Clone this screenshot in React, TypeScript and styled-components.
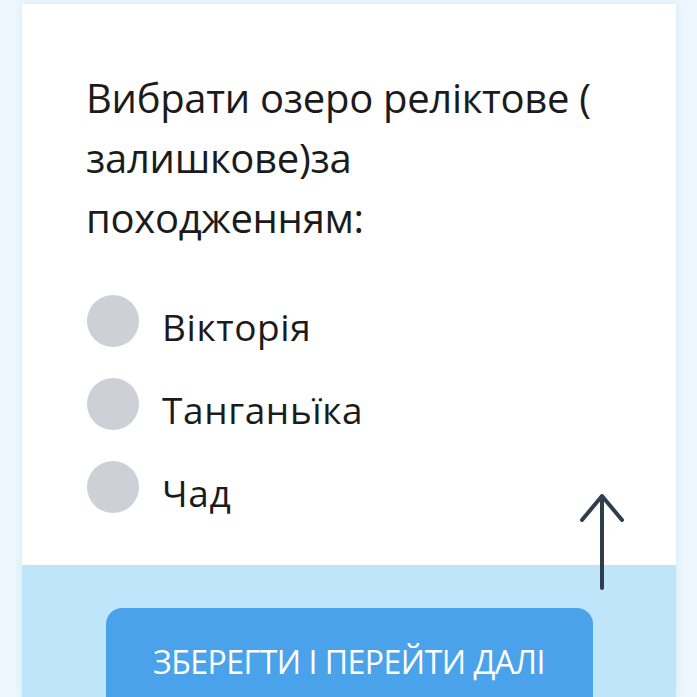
import styled, { createGlobalStyle } from "styled-components";

const GlobalStyle = createGlobalStyle`
  html, body {
    margin: 0;
    padding: 0;
    background: #edf7fd;
    font-family: "Open Sans", "Noto Sans", sans-serif;
    overflow: hidden;
  }
`;

const options = ["Вікторія", "Танганьїка", "Чад"];

export default function App() {
  return (
    <Page>
      <GlobalStyle />
      <Card>
        <Body>
          <Question>
            Вибрати озеро реліктове ( залишкове)за походженням:
          </Question>
          <OptionList>
            {options.map((opt) => (
              <Option key={opt}>
                <Radio />
                <Label>{opt}</Label>
              </Option>
            ))}
          </OptionList>
        </Body>
        <Footer>
          <SaveButton>ЗБЕРЕГТИ І ПЕРЕЙТИ ДАЛІ</SaveButton>
        </Footer>
      </Card>
      <ScrollTop aria-label="up">
        <svg width="48" height="98" viewBox="0 0 48 98" fill="none">
          <path
            d="M24 96 V4 M4 28 L24 4 L44 28"
            stroke="#2f3d4c"
            strokeWidth="4"
            strokeLinecap="round"
            strokeLinejoin="round"
          />
        </svg>
      </ScrollTop>
    </Page>
  );
}

const Page = styled.div`
  position: relative;
  height: 697px;
  padding: 4px 21px 0 22px;
  box-sizing: border-box;
  overflow: hidden;
`;

const Card = styled.div`
  background: #ffffff;
  height: 100%;
  display: flex;
  flex-direction: column;
  box-shadow: 0 0 10px rgba(170, 210, 240, 0.35);
`;

const Body = styled.div`
  padding: 64px 66px 0 65px;
  height: 561px;
  flex-shrink: 0;
  box-sizing: border-box;
`;

const Question = styled.div`
  font-size: 40px;
  line-height: 60px;
  color: #1b1b1b;
  letter-spacing: -0.3px;
  margin-left: -1px;
`;

const OptionList = styled.div`
  display: flex;
  flex-direction: column;
  gap: 31px;
  margin-top: 47px;
`;

const Option = styled.div`
  display: flex;
  align-items: center;
  gap: 23px;
  height: 52px;
`;

const Radio = styled.span`
  width: 52px;
  height: 52px;
  border-radius: 50%;
  background: #cdd0d6;
  flex-shrink: 0;
`;

const Label = styled.span`
  font-size: 37px;
  letter-spacing: 0.6px;
  color: #1b1b1b;
  padding-top: 10px;
`;

const Footer = styled.div`
  flex: 1;
  background: #bfe5fa;
  display: flex;
  justify-content: center;
  padding-top: 43px;
`;

const SaveButton = styled.button`
  width: 487px;
  height: 106px;
  flex-shrink: 0;
  border: none;
  border-radius: 16px;
  background: #4aa3ea;
  color: #ffffff;
  font-family: "Open Sans", "Noto Sans", sans-serif;
  font-size: 32px;
  letter-spacing: -0.5px;
  display: flex;
  justify-content: center;
  align-items: center;
  padding: 0;
`;

const ScrollTop = styled.div`
  position: absolute;
  left: 578px;
  top: 492px;
  width: 48px;
  height: 98px;
`;
